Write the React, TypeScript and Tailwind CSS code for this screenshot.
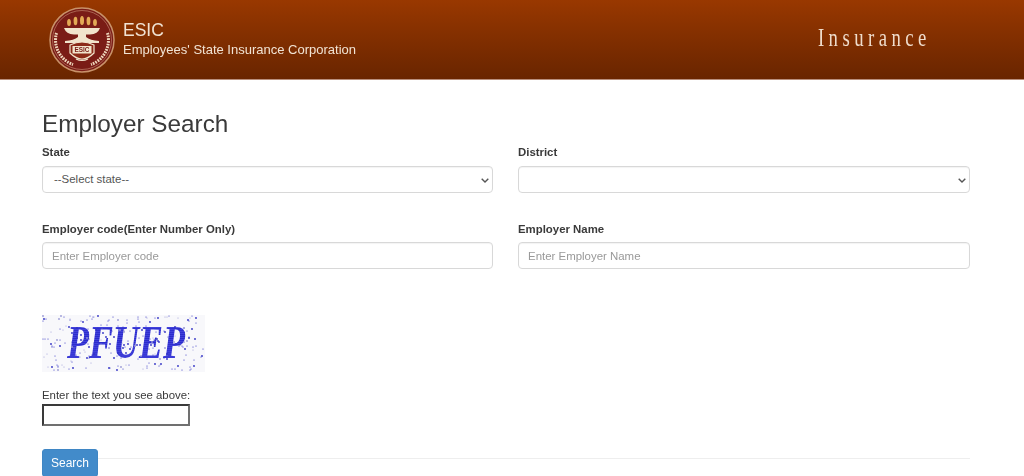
const noise: [number, number, number][] = Array.from({ length: 230 }, (_, i) => [
  ((i * 73 + (i * i) % 41) % 161) + 1,
  ((i * 37 + (i * i * 3) % 29) % 55) + 1,
  i % 3 === 0 ? 0.9 : 0.55,
]);

function Logo() {
  return (
    <svg width="66" height="66" viewBox="0 0 66 66" className="shrink-0 blur-[0.4px]">
      <circle cx="33" cy="33" r="32" fill="#7a1c16" stroke="#c8926a" strokeWidth="1.5" />
      <circle cx="33" cy="33" r="29.5" fill="none" stroke="#d9a98a" strokeWidth="0.5" />
      <g fill="#e3aa55">
        <ellipse cx="20" cy="15.5" rx="1.9" ry="3.6" />
        <ellipse cx="26.5" cy="14" rx="1.9" ry="4.2" />
        <ellipse cx="33" cy="13.5" rx="2" ry="4.6" />
        <ellipse cx="39.5" cy="14" rx="1.9" ry="4.2" />
        <ellipse cx="46" cy="15.5" rx="1.9" ry="3.6" />
      </g>
      <path d="M15 21 H51 Q49 27 41 27.5 H25 Q17 27 15 21 Z" fill="#f1e4cc" />
      <path d="M29 27 H37 V30 Q41 33.5 50 34 V36 H16 V34 Q25 33.5 29 30 Z" fill="#f1e4cc" />
      <path d="M21 38 Q33 32 45 38 V46 Q33 58 21 46 Z" fill="#8c2a18" stroke="#f1e4cc" strokeWidth="1.2" />
      <rect x="23.5" y="39" width="19" height="7.5" fill="#f1e4cc" />
      <text x="33" y="45.2" textAnchor="middle" fontSize="6.4" fontWeight="700" fill="#7a1c16" fontFamily="'Liberation Sans', sans-serif">ESIC</text>
      <path d="M27 52 Q33 55 39 52" fill="none" stroke="#f1e4cc" strokeWidth="1.1" />
      <path d="M7.5 26 A26 26 0 0 0 24 57.5" fill="none" stroke="#eed6bc" strokeWidth="3" strokeDasharray="1.7 1" />
      <path d="M58.5 26 A26 26 0 0 1 42 57.5" fill="none" stroke="#eed6bc" strokeWidth="3" strokeDasharray="1.7 1" />
    </svg>
  );
}

function Captcha() {
  return (
    <svg width="163" height="57" viewBox="0 0 163 57" className="block bg-[#f8f8fb] overflow-visible">
      <defs>
        <pattern id="stipple" width="2.2" height="1.8" patternUnits="userSpaceOnUse">
          <rect width="2.2" height="1.8" fill="#5a5aee" />
          <circle cx="1.1" cy="0.9" r="0.75" fill="#1010b8" />
        </pattern>
      </defs>
      <text
        transform="translate(25 43) scale(0.9 1.14)"
        fontSize="40"
        fontStyle="italic"
        fontWeight="700"
        fill="url(#stipple)"
        fontFamily="'Liberation Serif', serif"
      >
        PFUEP
      </text>
      {noise.map(([x, y, r], i) => (
        <circle key={i} cx={x} cy={y} r={r} fill={i % 4 === 0 ? "#9a9ad6" : "#3030c4"} />
      ))}
    </svg>
  );
}

const labelCls = "block text-[11.4px] leading-[17px] font-bold text-[#3a3a3a]";
const fieldCls =
  "block w-full h-[27px] bg-white border border-[#d8d8d8] rounded-[4px] text-[11.45px] text-[#555] shadow-[inset_0_1px_1px_rgba(0,0,0,0.05)]";

function SelectBox({ text }: { text?: string }) {
  return (
    <div className={`${fieldCls} relative flex items-center pl-[11px]`}>
      <span>{text}</span>
      <svg width="8" height="5" viewBox="0 0 8 5" className="absolute right-[3px] top-[11px]">
        <path d="M0.7 0.7 L4 4 L7.3 0.7" fill="none" stroke="#555" strokeWidth="1.4" />
      </svg>
    </div>
  );
}

export default function App() {
  return (
    <div className="h-[476px] w-[1024px] overflow-hidden bg-white font-['Liberation_Sans',Arial,sans-serif] text-[#3a3a3a]">
      <header className="h-[80px] border-b border-[#b98f7c] bg-gradient-to-b from-[#993800] to-[#692500] flex items-center justify-between pl-[49px] pr-[94px]">
        <div className="flex items-center gap-[8px]">
          <Logo />
          <div className="text-[#f1e3d3] mt-[-1px] blur-[0.25px]">
            <div className="text-[17.5px] leading-[22px]">ESIC</div>
            <div className="text-[13px] leading-[18px]">Employees' State Insurance Corporation</div>
          </div>
        </div>
        <div className="font-['Liberation_Serif',serif] text-[26px] leading-[30px] tracking-[6.2px] mr-[-0.5px] text-[#efdccb] mt-[-3px] scale-x-[0.72] origin-right blur-[0.25px]">
          Insurance
        </div>
      </header>

      <main className="pl-[42px] blur-[0.3px]">
        <h1 className="mt-[29px] text-[24.3px] leading-[30px] font-normal text-[#3a3a3a]">Employer Search</h1>
        <div className="w-[928px] mt-[5px] grid grid-cols-[451px_452px] gap-x-[25px]">
          <div className="flex flex-col gap-[5px]">
            <label className={labelCls}>State</label>
            <SelectBox text="--Select state--" />
          </div>
          <div className="flex flex-col gap-[5px]">
            <label className={labelCls}>District</label>
            <SelectBox />
          </div>
          <div className="mt-[28px] flex flex-col gap-[4px]">
            <label className={labelCls}>Employer code(Enter Number Only)</label>
            <input placeholder="Enter Employer code" className={`${fieldCls} px-[9px] placeholder:text-[#999]`} />
          </div>
          <div className="mt-[28px] flex flex-col gap-[4px]">
            <label className={labelCls}>Employer Name</label>
            <input placeholder="Enter Employer Name" className={`${fieldCls} px-[9px] placeholder:text-[#999]`} />
          </div>
        </div>

        <div className="mt-[46px]">
          <Captcha />
        </div>
        <div className="mt-[16px] text-[11.4px] leading-[15px]">Enter the text you see above:</div>
        <input className="block w-[148px] h-[22px] bg-white border-2 border-t-[#3a3a3a] border-l-[#3a3a3a] border-r-[#707070] border-b-[#707070] mt-[1px]" />

        <div className="w-[928px] mt-[23px] flex items-start">
          <button className="w-[56px] h-[28px] bg-[#428bca] border border-[#3f86c4] rounded-[3px] text-[12px] text-white shrink-0">
            Search
          </button>
          <hr className="flex-1 mt-[9px] border-0 border-t border-[#eee]" />
        </div>
      </main>
    </div>
  );
}
